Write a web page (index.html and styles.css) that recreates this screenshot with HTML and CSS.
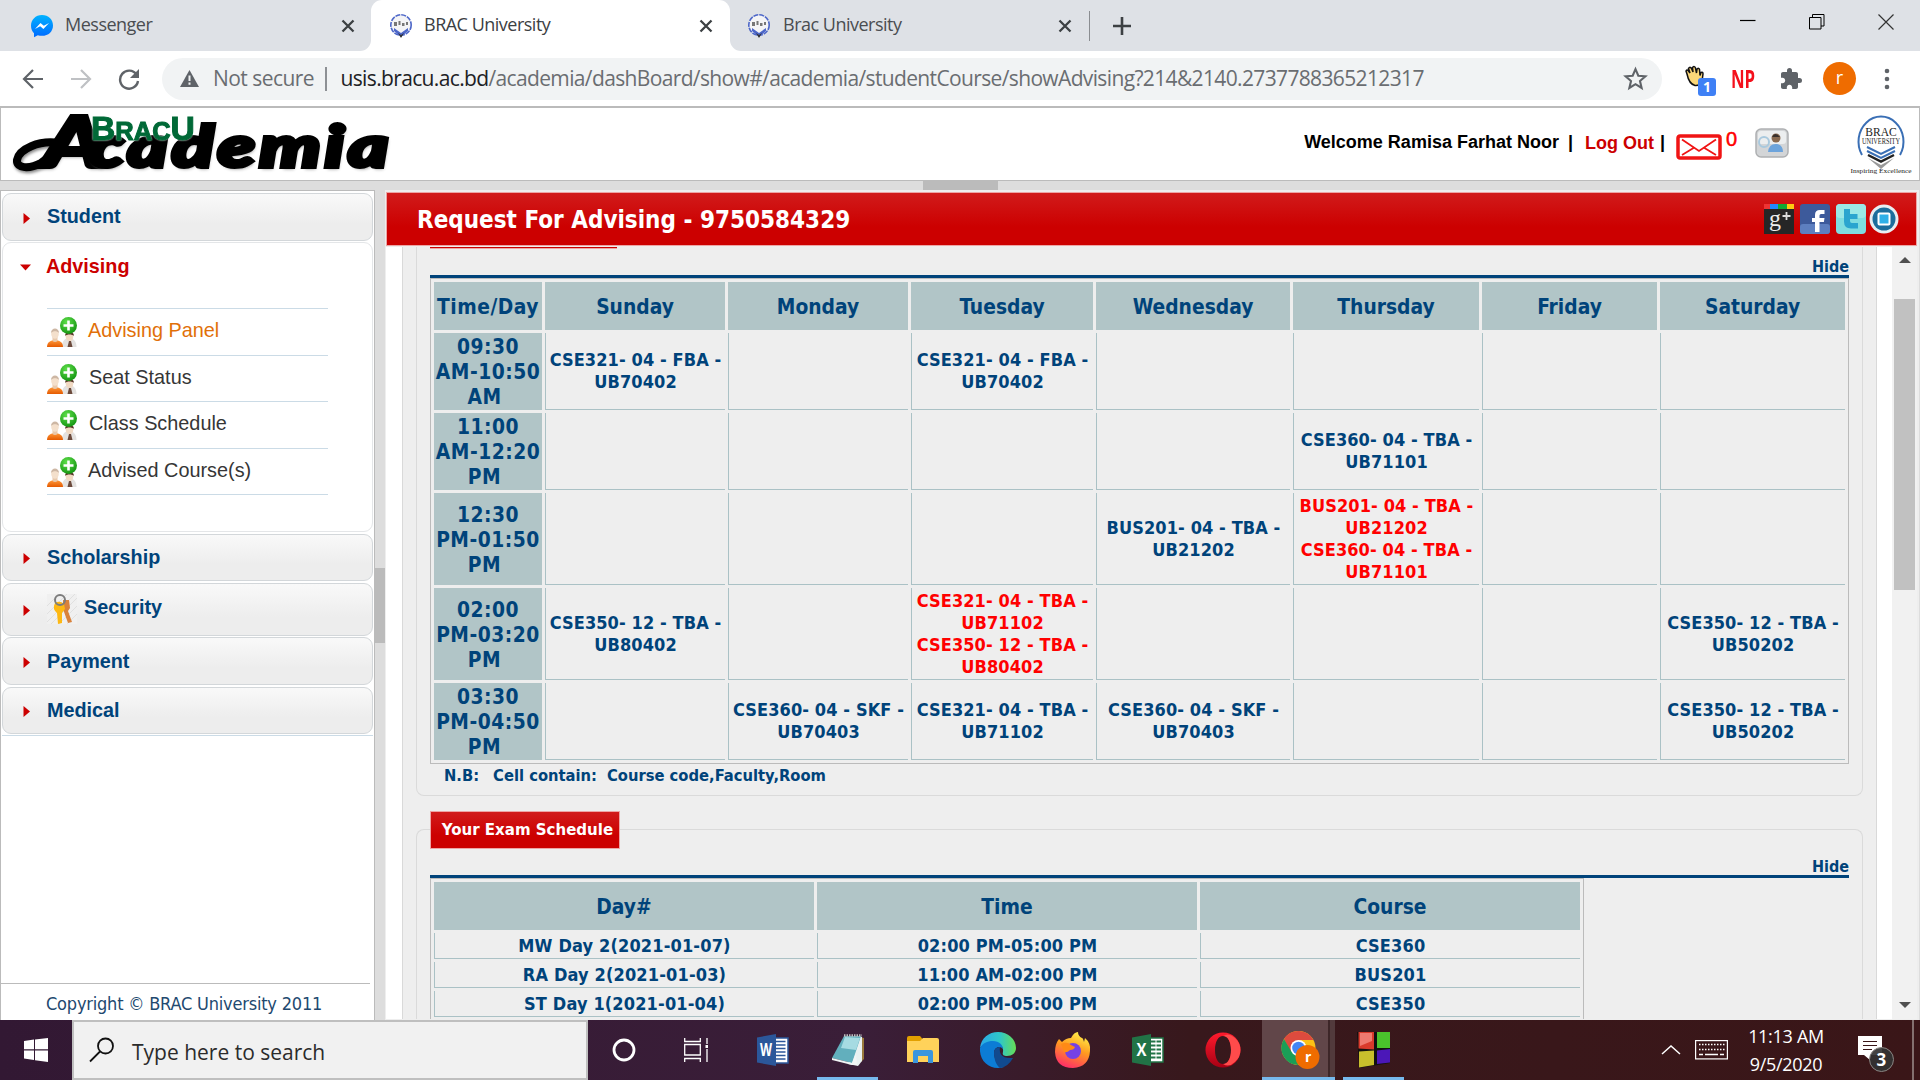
FILE: index.html
```html
<!DOCTYPE html>
<html lang="en">
<head>
<meta charset="utf-8">
<title>BRAC University</title>
<link rel="stylesheet" href="styles.css">
</head>
<body>
<svg width="0" height="0" class="defs">
  <defs>
    <radialGradient id="gGreen" cx=".4" cy=".3" r=".8"><stop offset="0" stop-color="#5fe04a"/><stop offset="1" stop-color="#0c8d0c"/></radialGradient>
    <linearGradient id="gOrange" x1="0" y1="0" x2="0" y2="1"><stop offset="0" stop-color="#ff9a3c"/><stop offset="1" stop-color="#e55a00"/></linearGradient>
    <linearGradient id="gMsg" x1="0" y1="0" x2="0" y2="1"><stop offset="0" stop-color="#00b2ff"/><stop offset="1" stop-color="#006aff"/></linearGradient>
    <symbol id="close" viewBox="0 0 14 14"><path d="M1.5 1.5 12.500 12.500M12.500 1.500 1.500 12.500" stroke="#3c4043" stroke-width="2.300" fill="none"/></symbol>
    <symbol id="crest" viewBox="0 0 24 24"><circle cx="12" cy="11" r="10.200" fill="#f4f4f6" stroke="#4c66c8" stroke-width="1.600" stroke-dasharray="5 1"/><path d="M5 8h3v4H5zM9.500 7h2v4h-2zM13 9h2.500v3H13zM17 8h2v3h-2z" fill="#777"/><path d="M5 14l7 5 7-5v3l-7 6-7-6z" fill="#4c66c8"/><path d="M9 19l3 2 3-2-3 5z" fill="#333"/></symbol>
    <symbol id="people" viewBox="0 0 30 30"><path d="M15 30c0-6 3-9 7-9s7.500 3 7.500 9z" fill="#e4e2e0"/><ellipse cx="22.500" cy="19.500" rx="3.800" ry="5" fill="#f0d9c3"/><path d="M18 19c0-6 9-6 9 0-2-2-7-2-9 0z" fill="#5a3a2a"/><path d="M22 24l2 0 1.500 6h-5z" fill="#6b4a3c"/><circle cx="21.500" cy="8.500" r="8.500" fill="url(#gGreen)"/><path d="M21.500 3.500v10M16.500 8.500h10" stroke="#fff" stroke-width="2.600"/><path d="M0 30c0-5 4-7 8-7s8 2 8 7z" fill="url(#gOrange)"/><path d="M5.500 20h5v4q-2.500 2-5 0z" fill="#e9c9ac"/><ellipse cx="8" cy="17" rx="3.800" ry="4.800" fill="#f4e0cc"/><path d="M4 16c0-6 8-6 8 0-2-2.500-6-2.500-8 0z" fill="#cdb7a4"/></symbol>
    <symbol id="arrow" viewBox="0 0 8 11"><path d="M.5 0 7 5.500.5 11z" fill="#c00"/></symbol>
  </defs>
</svg>

<div class="tabs">
  <div class="tab tab-1"><svg class="fav" viewBox="0 0 24 24"><path d="M12 1C5.500 1 1 5.800 1 11.800c0 3.200 1.200 5.600 3 7.400v4l3.800-2c1.300.4 2.700.6 4.200.6 6.500 0 11-4.500 11-10.400S18.500 1 12 1z" fill="url(#gMsg)"/><path d="M5 15l5.500-6 3.300 2.700L19 9l-5.600 6-3.200-2.700z" fill="#fff"/></svg><span class="t-msg">Messenger</span><svg class="x"><use href="#close"/></svg></div>
  <div class="tab active"><svg class="fav"><use href="#crest"/></svg><span class="t-brac">BRAC University</span><svg class="x"><use href="#close"/></svg></div>
  <div class="tab tab-3"><svg class="fav"><use href="#crest"/></svg><span class="t-brac2">Brac University</span><svg class="x"><use href="#close"/></svg></div>
  <svg class="plus" viewBox="0 0 18 18"><path d="M9 0v18M0 9h18" stroke="#3c4043" stroke-width="2.600"/></svg>
  <div class="win">
    <svg width="16" height="16" viewBox="0 0 16 16"><path d="M0 6.500h15.500" stroke="#000" stroke-width="1.200"/></svg>
    <svg width="16" height="16" viewBox="0 0 16 16"><path d="M.5 3.500h11.500v11.500H.5zM3.500 3.500V.5H15v11.500h-3" stroke="#000" fill="none"/></svg>
    <svg width="16" height="16" viewBox="0 0 16 16"><path d="M.5.5l15 15M15.500.5l-15 15" stroke="#333" stroke-width="1.200"/></svg>
  </div>
</div>

<div class="toolbar">
  <svg class="nav-i" viewBox="0 0 22 22"><path d="M21 11H2.500M11 2 2 11l9 9" stroke="#5f6368" stroke-width="2.200" fill="none"/></svg>
  <svg class="nav-i" viewBox="0 0 22 22"><path d="M1 11h18.500M11 2l9 9-9 9" stroke="#bfc1c4" stroke-width="2.200" fill="none"/></svg>
  <svg class="nav-i" viewBox="0 0 22 22"><path d="M18.500 6.500A9 9 0 1 0 20 13" stroke="#5f6368" stroke-width="2.400" fill="none"/><path d="M21 1v9h-9z" fill="#5f6368"/></svg>
  <div class="omni">
    <svg class="warn" viewBox="0 0 19 17"><path d="M9.500 0 19 17H0z" fill="#5f6368"/><path d="M9.500 5.500v5.500M9.500 12.500v2.200" stroke="#f1f3f4" stroke-width="2"/></svg>
    <span class="insec">Not secure</span><i class="bar"></i>
    <span class="url"><b>usis.bracu.ac.bd</b>/academia/dashBoard/show#/academia/studentCourse/showAdvising?214&amp;2140.2737788365212317</span>
    <svg class="star" viewBox="0 0 24 24"><path d="M12 3l2.700 6.300 6.800.6-5.200 4.500 1.600 6.700L12 17.500l-5.900 3.600 1.600-6.700L2.500 9.900l6.800-.6z" fill="none" stroke="#5f6368" stroke-width="2"/></svg>
  </div>
  <div class="ext">
    <div class="hand"><svg width="22" height="22" viewBox="0 0 22 22"><path d="M3 9 2 6q1-2 2.500 0L6 8 4.500 3.500Q6 1 7.500 3.500L9 7 8.500 2.500Q10.500.5 11.500 3l1 5 .5-4q2-1.500 2.500.5l.5 6 1-3q2-1 2 1.500l-1 7q-2 5-7 4.500Q5 19 3 9z" fill="#fbd779" stroke="#111" stroke-width="1.500"/></svg><span class="badge">1</span></div>
    <span class="np">NP</span>
    <svg class="puz" viewBox="0 0 24 24"><path d="M20.500 11H19V7c0-1.100-.9-2-2-2h-4V3.500a2.500 2.500 0 0 0-5 0V5H4c-1.100 0-2 .9-2 2v3.800h1.500c1.500 0 2.700 1.200 2.700 2.700S5 16.200 3.500 16.200H2V20c0 1.100.9 2 2 2h3.800v-1.500c0-1.500 1.200-2.700 2.700-2.700s2.700 1.200 2.700 2.700V22H17c1.100 0 2-.9 2-2v-4h1.500a2.500 2.500 0 0 0 0-5z" fill="#5f6368"/></svg>
    <span class="avatar">r</span>
    <svg class="dots" viewBox="0 0 6 22"><circle cx="3" cy="3" r="2.300"/><circle cx="3" cy="11" r="2.300"/><circle cx="3" cy="19" r="2.300"/></svg>
  </div>
</div>

<header class="site">
  <div class="logo">
    <svg class="swash" width="90" height="64" viewBox="0 0 90 64"><path d="M56 31C36 28 16 37 14 48c-1 9 13 9 24 3 8-5 14-12 20-20" fill="none" stroke="#000" stroke-width="8" stroke-linecap="round"/></svg>
    <span class="academia"><b>A</b>cademia</span><span class="bracu">B<small>RAC</small>U</span>
  </div>
  <div class="user">
    <span class="welcome">Welcome Ramisa Farhat Noor</span><span class="pipe p1">|</span><span class="logout">Log Out</span><span class="pipe">|</span>
    <svg class="mail" viewBox="0 0 46 26"><rect x="2" y="2" width="42" height="22" rx="2" fill="#fff" stroke="#f01414" stroke-width="3.500"/><path d="M6 5.500l17 11.500L40 5.500M6 21l11.500-7M40 21l-11.500-7" fill="none" stroke="#f01414" stroke-width="1.800"/></svg>
    <span class="count">0</span>
    <svg class="ucard" viewBox="0 0 34 30"><rect x="1" y="1" width="32" height="28" rx="5" fill="#d3d5d7" stroke="#aeb0b2" stroke-width="1.500"/><rect x="3" y="3" width="28" height="13" rx="3" fill="#eceeef"/><circle cx="9" cy="14" r="5" fill="none" stroke="#a9c9de" stroke-width="2"/><circle cx="21" cy="10" r="4.500" fill="#8a6a50"/><path d="M17 9q3-6 8 0z" fill="#39302c"/><path d="M13 24q1-9 9-8 6 1 6 8z" fill="#6da4dc"/></svg>
    <svg class="univ" viewBox="0 0 62 60"><path d="M12 41A22.500 25 0 1 1 50 41" fill="none" stroke="#3a6fb5" stroke-width="2"/><text x="31" y="22" class="u1">BRAC</text><text x="31" y="30" class="u2" textLength="38" lengthAdjust="spacingAndGlyphs">UNIVERSITY</text><path d="M17 33l14 7 14-7M17 37l14 7 14-7" fill="none" stroke="#3a6fb5" stroke-width="2"/><path d="M18 41l13 6.500L44 41" fill="none" stroke="#222" stroke-width="2.500"/><path d="M18 44l13 7 13-7-13 11z" fill="#999"/><text x="31" y="59" class="u3" textLength="61" lengthAdjust="spacingAndGlyphs">Inspiring Excellence</text></svg>
  </div>
</header>
<div class="split-h"><i></i></div>

<div class="main">
  <aside class="side">
    <div class="menu">
      <div class="acc h48"><svg><use href="#arrow"/></svg><span>Student</span></div>
      <div class="open">
        <div class="acc-open"><svg viewBox="0 0 11 7"><path d="M0 .5h11L5.500 6.500z" fill="#c00"/></svg><span>Advising</span></div>
        <ul>
          <li class="on"><svg><use href="#people"/></svg><span>Advising Panel</span></li>
          <li><svg><use href="#people"/></svg><span>Seat Status</span></li>
          <li><svg><use href="#people"/></svg><span>Class Schedule</span></li>
          <li><svg><use href="#people"/></svg><span>Advised Course(s)</span></li>
        </ul>
      </div>
      <div class="acc h47 gap2"><svg><use href="#arrow"/></svg><span class="low">Scholarship</span></div>
      <div class="acc h53 gap2 sec"><svg><use href="#arrow"/></svg>
        <svg class="keys" viewBox="0 0 30 30"><rect width="30" height="30" fill="#f0f0f0"/><path d="M0 20L20 0M0 28L28 0M4 30L30 4M12 30L30 12M20 30l10-10M0 12L12 0" stroke="#e0e0e0"/><path d="M16 6l6 0 1 8-2 3 4 11-4 1-5-14z" fill="#d9823b"/><path d="M8 9q5-3 9 1l1 5-3 4v10l-4 1-1-11q-5-4-2-10z" fill="#fdb813"/><circle cx="13" cy="6" r="5" fill="none" stroke="#7c7c7c" stroke-width="2"/></svg><span>Security</span></div>
      <div class="acc h48"><svg><use href="#arrow"/></svg><span class="low">Payment</span></div>
      <div class="acc h47 gap2"><svg><use href="#arrow"/></svg><span class="low">Medical</span></div>
      <div class="endline"></div>
    </div>
    <footer><span>Copyright © BRAC University 2011</span></footer>
  </aside>
  <div class="split-v"><i></i></div>

  <section class="work">
    <div class="title"><h1>Request For Advising - 9750584329</h1>
      <svg width="30" height="30" viewBox="0 0 30 30"><rect width="30" height="30" fill="#262626"/><rect width="8" height="5" fill="#e33"/><rect x="6" width="8" height="5" fill="#28f"/><rect x="14" width="9" height="5" fill="#1a3"/><rect x="23" width="7" height="5" fill="#fc1"/><text x="5" y="22" class="g">g</text><path d="M22.500 8v8M18.500 12h8" stroke="#ddd" stroke-width="1.800"/></svg>
      <svg width="30" height="30" viewBox="0 0 30 30"><rect width="30" height="30" rx="3" fill="#3d5a9b"/><rect y="20" width="30" height="10" rx="3" fill="#5d7fc0"/><path d="M15 28V18h-3v-4h3v-3q0-5 5-5h4.500v4H21q-1.500 0-1.500 1.500V14h5l-.6 4h-4.400v10z" fill="#fff"/></svg>
      <svg width="30" height="30" viewBox="0 0 30 30"><rect width="30" height="30" rx="4" fill="#7fdde0"/><rect y="0" width="30" height="14" rx="4" fill="#9be8e6"/><path d="M8 5h6v5h7.500v5H14v2q0 2 2 2h6V24.500h-7q-7 0-7-7z" fill="#2aa5cf"/></svg>
      <svg width="30" height="30" viewBox="0 0 30 30"><circle cx="15" cy="15" r="14.500" fill="#e8eef2"/><circle cx="15" cy="15" r="11.500" fill="#1c6d9c"/><rect x="9.500" y="9.500" width="11" height="11" rx="1" fill="#2fb0e8" stroke="#fff" stroke-width="2"/></svg>
    </div>
    <div class="scroll">
      <div class="panel">
        <div class="fs fs1">
          <div class="legend-end"></div>
          <div class="hide">Hide</div>
          <table class="sched">
            <colgroup><col style="width:108px"><col style="width:180px"><col style="width:180px"><col style="width:182px"><col style="width:194px"><col style="width:186px"><col style="width:175px"><col style="width:185px"></colgroup>
            <tr class="hd"><th>Time/Day</th><th>Sunday</th><th>Monday</th><th>Tuesday</th><th>Wednesday</th><th>Thursday</th><th>Friday</th><th>Saturday</th></tr>
            <tr class="r77"><th>09:30<br>AM-10:50<br>AM&nbsp;</th><td>CSE321- 04 - FBA -<br>UB70402</td><td></td><td>CSE321- 04 - FBA -<br>UB70402</td><td></td><td></td><td></td><td></td></tr>
            <tr class="r77"><th>11:00<br>AM-12:20<br>PM&nbsp;</th><td></td><td></td><td></td><td></td><td>CSE360- 04 - TBA -<br>UB71101</td><td></td><td></td></tr>
            <tr class="r92"><th>12:30<br>PM-01:50<br>PM&nbsp;</th><td></td><td></td><td></td><td>BUS201- 04 - TBA -<br>UB21202</td><td class="clash">BUS201- 04 - TBA -<br>UB21202<br>CSE360- 04 - TBA -<br>UB71101</td><td></td><td></td></tr>
            <tr class="r92"><th>02:00<br>PM-03:20<br>PM&nbsp;</th><td>CSE350- 12 - TBA -<br>UB80402</td><td></td><td class="clash">CSE321- 04 - TBA -<br>UB71102<br>CSE350- 12 - TBA -<br>UB80402</td><td></td><td></td><td></td><td>CSE350- 12 - TBA -<br>UB50202</td></tr>
            <tr class="r77"><th>03:30<br>PM-04:50<br>PM&nbsp;</th><td></td><td>CSE360- 04 - SKF -<br>UB70403</td><td>CSE321- 04 - TBA -<br>UB71102</td><td>CSE360- 04 - SKF -<br>UB70403</td><td></td><td></td><td>CSE350- 12 - TBA -<br>UB50202</td></tr>
          </table>
          <div class="nb"><span>N.B:</span><span>Cell contain:</span><span>Course code,Faculty,Room</span></div>
        </div>
        <div class="legend"><span>Your Exam Schedule</span></div>
        <div class="fs fs2">
          <div class="hide">Hide</div>
          <table class="exam">
            <tr class="hd"><th>Day#</th><th>Time</th><th>Course</th></tr>
            <tr><td>MW Day 2(2021-01-07)</td><td>02:00 PM-05:00 PM</td><td>CSE360</td></tr>
            <tr><td>RA Day 2(2021-01-03)</td><td>11:00 AM-02:00 PM</td><td>BUS201</td></tr>
            <tr><td>ST Day 1(2021-01-04)</td><td>02:00 PM-05:00 PM</td><td>CSE350</td></tr>
          </table>
        </div>
      </div>
      <div class="sbar"><svg width="12" height="6"><path d="M0 6 6 0l6 6z" fill="#505050"/></svg><i></i><svg width="12" height="6"><path d="M0 0h12L6 6z" fill="#505050"/></svg></div>
    </div>
  </section>
</div>

<div class="task">
  <div class="start"><svg width="24" height="24" viewBox="0 0 24 24"><path d="M0 3l10-1.400V11.300H0zM11 1.400 24 0v11.300H11zM0 12.500h10V22L0 20.600zM11 12.500h13V24l-13-1.800z" fill="#fff"/></svg></div>
  <div class="search"><svg width="26" height="26" viewBox="0 0 26 26"><circle cx="16.500" cy="9" r="7.500" fill="none" stroke="#111" stroke-width="1.800"/><path d="M11 14.500 1 24.500" stroke="#111" stroke-width="1.800"/></svg><span>Type here to search</span></div>
  <div class="apps">
    <div class="app c1"><svg width="24" height="24" viewBox="0 0 24 24"><circle cx="12" cy="12" r="10" fill="none" stroke="#fff" stroke-width="2.800"/></svg></div>
    <div class="app tv"><svg width="24" height="24" viewBox="0 0 24 24"><path d="M.7 0v3.500h15.600V0M.7 24v-3.500h15.600V24M.7 6.500h15.600v10.500H.7zM23 0v6M23 11v13" fill="none" stroke="#fff" stroke-width="1.300"/><path d="M21.500 7h3v3h-3z" fill="#fff"/></svg></div>
    <div class="app"><svg width="32" height="32" viewBox="0 0 32 32"><rect x="17" y="4" width="14" height="25" fill="#fff" stroke="#2b579a" stroke-width="1.500"/><path d="M19 7.500h9.500M19 11h9.500M19 14.500h9.500M19 18h9.500M19 21.500h9.500M19 25h9.500" stroke="#2b579a" stroke-width="1.500"/><path d="M0 3.500 19 0v32L0 28.500z" fill="#2b579a"/><text x="3" y="22" class="of" textLength="12" lengthAdjust="spacingAndGlyphs">W</text></svg></div>
    <div class="app under"><svg width="32" height="32" viewBox="0 0 32 32"><path d="M28 3l4 1v21l-3 3z" fill="#9a7a3c"/><path d="M22 3h8v24l-4 5-10-2z" fill="#e9f1f1"/><path d="M12 2h17l-9 27-20-5z" fill="#62afbd"/><path d="M13 3l15 1-4 12-15-2z" fill="#a6dbe2"/><path d="M0 24l20 5 4-10 1 12-5 0-20-5z" fill="#f1f5f5"/><path d="M12 1.500h18" stroke="#bdbdbd" stroke-width="2.500" stroke-dasharray="1.500 1"/></svg></div>
    <div class="app"><svg width="32" height="28" viewBox="0 0 32 28"><path d="M0 2q0-2 2-2h11l2.500 3v10H0z" fill="#e2a000"/><path d="M0 5h13l3-3h14q2 0 2 2v22H0z" fill="#ffd25a"/><path d="M6 27V16q0-2 2-2h16q2 0 2 2v11h-5v-7H11v7z" fill="#3a96dd"/></svg></div>
    <div class="app"><svg width="36" height="36" viewBox="0 0 36 36"><defs><linearGradient id="e1"><stop offset="0" stop-color="#2aa8e8"/><stop offset=".55" stop-color="#2fc7c8"/><stop offset="1" stop-color="#66dd55"/></linearGradient></defs><path d="M0 16C1 6 9 0 18 0c10 0 18 7 18 16 0 5-4 8-9 8-3 0-5-1-4-4 1-5-3-9-9-9-6 0-12 2-14 5z" fill="url(#e1)"/><path d="M0 16c3-5 7-7 13-7 6 0 10 4 10 8-3-4-9-2-9 4 0 6 5 14 10 14C11 39-1 30 0 16z" fill="#0c7cd5"/><path d="M14 21c0-4 3-6 6-6-1 6 1 12 13 11q-5 9-13 10c-4-3-6-9-6-15z" fill="#114a8f"/></svg></div>
    <div class="app"><svg width="36" height="36" viewBox="0 0 36 36"><defs><linearGradient id="f1" x1=".7" y1="0" x2=".3" y2="1"><stop offset="0" stop-color="#fff04a"/><stop offset=".45" stop-color="#ff9a1f"/><stop offset="1" stop-color="#ff2a6a"/></linearGradient></defs><path d="M4 7l3 3q4-4 9-4 3-6 7-6 0 4 4 6 1 0 2 4l1-4q6 5 5 13-1 16-17 17Q1 36 0 20q0-8 4-13z" fill="url(#f1)"/><circle cx="18" cy="19" r="8" fill="#7542e5"/><path d="M6 12q6-3 10 1l4 2q-1 3-5 3-3 3-6 2z" fill="#ff8a16"/></svg></div>
    <div class="app"><svg width="32" height="32" viewBox="0 0 32 32"><rect x="17" y="4" width="14" height="24" fill="#fff" stroke="#217346" stroke-width="1.500"/><path d="M19 7.500h10M19 11.500h10M19 15.500h10M19 19.500h10M19 23.500h10" stroke="#217346" stroke-width="2.200" stroke-dasharray="4.500 1"/><path d="M0 3.500 19 0v32L0 28.500z" fill="#217346"/><text x="4.500" y="22" class="of" textLength="10" lengthAdjust="spacingAndGlyphs">X</text></svg></div>
    <div class="app"><svg width="36" height="36" viewBox="0 0 36 36"><defs><linearGradient id="o1" x1="0" y1="0" x2="0" y2="1"><stop offset="0" stop-color="#ff1b2d"/><stop offset="1" stop-color="#a70014"/></linearGradient></defs><path fill-rule="evenodd" d="M18 .5a17.500 17.500 0 1 0 0 35 17.500 17.500 0 1 0 0-35zM18 4c5 0 8 6 8 14s-3 14-8 14-8-6-8-14 3-14 8-14z" fill="url(#o1)"/><path d="M18 4q6-4 12 2 5.500 5 5.500 12T30 30q-6 6-12 2c5 0 8-6 8-14s-3-14-8-14z" fill="#ff4b4b"/></svg></div>
    <div class="app chrome"><svg width="40" height="40" viewBox="0 0 40 40"><circle cx="17.500" cy="18" r="17" fill="#fbc116"/><path d="M3 9A17 17 0 0 1 32.500 10H17.500l-8 12z" fill="#dd4b3e"/><path d="M3 9a17 17 0 0 0 14 26l8-14-15 0z" fill="#1a9e57"/><circle cx="17.500" cy="18" r="8" fill="#fff"/><circle cx="17.500" cy="18" r="6.300" fill="#4285f4"/><circle cx="26.500" cy="27" r="12" fill="#ef6c00"/><text x="24" y="32" class="rr">r</text></svg></div>
    <div class="app under sq"><svg width="34" height="36" viewBox="0 0 34 36"><path d="M0 0h33v31L2 36z" fill="#111"/><path d="M1.500 0H17v17.500l-15.500-1z" fill="#d83a2c"/><path d="M3 1h12v8L3 14z" fill="#ee7a70"/><path d="M20 0h13v16H20z" fill="#4ac22c"/><path d="M2 19.500l15-1V33L2 35.500z" fill="#c8bf2c"/><path d="M20 18.500l13-1.500v13.500L20 32z" fill="#4b17b8"/></svg></div>
  </div>
  <div class="tray">
    <svg width="20" height="10" viewBox="0 0 20 10"><path d="M1 9l9-8 9 8" stroke="#fff" stroke-width="1.500" fill="none"/></svg>
    <svg class="kb" width="33" height="20" viewBox="0 0 33 20"><rect x=".6" y=".6" width="31.800" height="18.300" fill="none" stroke="#fff" stroke-width="1.200"/><path d="M4 4.500h26M4 9.500h26" stroke="#fff" stroke-width="1.300" stroke-dasharray="1.500 1.500"/><path d="M4 14.500h4M10 14.500h13M25 14.500h4" stroke="#fff" stroke-width="1.300"/></svg>
    <div class="clock"><span class="time">11:13 AM</span><span class="date">9/5/2020</span></div>
    <svg class="note" width="38" height="38" viewBox="0 0 38 38"><path d="M0 1h24v19H12v5l-6-5H0z" fill="#fff"/><path d="M5 6.500h14M5 10.500h14M5 14.500h9" stroke="#3a1618" stroke-width="1.200"/><circle cx="23.500" cy="24.500" r="12" fill="#333" fill-opacity=".92" stroke="#8a8583"/><text x="18.500" y="31" class="n3">3</text></svg>
    <i class="desk"></i>
  </div>
</div>
</body>
</html>
```
FILE: styles.css
```css
* { box-sizing: border-box; }
body { margin: 0; width: 1920px; height: 1080px; overflow: hidden; background: #ddd; font-family: "Liberation Sans", Arial, sans-serif; }
svg { display: block; flex: none; }
span, h1 { white-space: nowrap; }
.defs { position: absolute; }

/* browser tabs */
.tabs { height: 51px; background: #dee1e6; display: flex; align-items: center; font: 18px/24px "Open Sans", "Noto Sans", sans-serif; color: #4a4d51; letter-spacing: -.5px; }
.tab { height: 51px; display: flex; align-items: center; }
.tab span { flex: 1; padding: 0 0 3px 11px; }
.tab-1 { width: 371px; padding: 0 16px 0 30px; border-radius: 0 0 11px 0; background: #dee1e6; position: relative; }
.tab.active { width: 359px; padding: 0 17px 0 18px; background: #fff; border-radius: 11px 11px 0 0; color: #3c4043; }
.tab-3 { width: 359px; padding: 0 17px; border-radius: 0 0 0 11px; }
.tab-3 span { padding-left: 12px; }
.tab-3::after { content: ""; width: 1px; height: 30px; background: #8a8d91; margin: 0 -18px 0 17px; }
.tabs .tab-1, .tabs .tab-3 { box-shadow: 0 11px 0 0 #fff; z-index: 1; }
.fav { width: 24px; height: 24px; }
.x { width: 14px; height: 14px; }
.plus { width: 18px; height: 18px; margin-left: 24px; }
.win { display: flex; margin-left: auto; gap: 53px; padding: 0 26px 8px 0; }

/* address bar */
.toolbar { height: 55px; background: #fff; display: flex; align-items: center; padding: 0 0 0 22px; position: relative; z-index: 2; font-family: "Open Sans", "Noto Sans", sans-serif; }
.nav-i { width: 22px; height: 22px; margin-right: 26px; }
.omni { width: 1500px; height: 42px; margin-left: -4px; border-radius: 21px; background: #f1f3f4; display: flex; align-items: center; padding-left: 18px; font-size: 21px; line-height: 28px; color: #6a6d71; }
.warn { width: 19px; height: 17px; }
.insec { margin-left: 14px; width: 112px; letter-spacing: -.55px; padding-bottom: 1px; }
.bar { width: 1.500px; height: 24px; background: #8d9094; margin-right: 14px; }
.url { letter-spacing: -.64px; padding-bottom: 1px; }
.url b { font-weight: 400; color: #202124; }
.star { width: 25px; height: 25px; margin: 0 14px 0 auto; }
.ext { display: flex; align-items: center; flex: 1; padding-left: 22px; }
.hand { width: 32px; height: 32px; position: relative; margin-top: 4px; }
.badge { position: absolute; left: 14px; top: 13px; width: 18px; height: 18px; border-radius: 3px; background: #3f80f5; color: #fff; font: bold 14px/18px "Open Sans", sans-serif; text-align: center; }
.np { width: 24px; margin-left: 15px; padding-bottom: 2px; color: #f4101c; font: bold 25px/30px "Open Sans", sans-serif; transform: scaleX(.67); transform-origin: left; }
.puz { width: 24px; height: 24px; margin-left: 24px; }
.avatar { width: 33px; height: 33px; border-radius: 50%; background: #ef6c00; color: #fff; font-size: 18px; line-height: 30px; text-align: center; margin-left: 20px; }
.dots { width: 6px; height: 22px; margin-left: 28px; fill: #5f6368; }

/* site header */
.site { height: 75px; background: #fff; border: 1px solid #bbb; border-top-width: 2px; display: flex; justify-content: space-between; }
.logo { position: relative; width: 400px; }
.swash { position: absolute; left: 2px; top: 4px; filter: drop-shadow(1px 2px 1.500px #888); }
.academia { position: absolute; left: 42px; top: 1px; font: italic 900 57px/72px "Lato", sans-serif; color: #000; -webkit-text-stroke: 4px #000; text-shadow: 1px 2px 3px #888; letter-spacing: 3px; transform-origin: left; transform: scaleX(1.35); }
.academia b { font-weight: 900; font-size: 70px; line-height: 60px; margin-right: -15px; }
.bracu { position: absolute; left: 90px; top: 5px; font: bold 33px/32px "Liberation Sans", sans-serif; color: #006937; -webkit-text-stroke: 1px #006937; text-shadow: 0 0 2px #fff, 0 0 2px #fff; transform: scaleX(1.02); transform-origin: left; }
.bracu small { font-size: 25px; }
.user { display: flex; align-items: flex-start; font-weight: bold; font-size: 18px; line-height: 22px; color: #000; padding-top: 23px; }
.pipe.p1 { margin: 0 12px 0 9px; }
.logout { color: #c00; margin: 1px 6px 0 0; }
.mail { width: 46px; height: 26px; margin: 3px 4px 0 11px; }
.count { color: #f00; font-size: 20px; font-weight: 400; margin-top: -3px; width: 29px; -webkit-text-stroke: .5px #f00; }
.ucard { width: 34px; height: 30px; margin-top: -3px; }
.univ { width: 62px; height: 60px; margin: -17px 7px 0 61px; }
.univ text { text-anchor: middle; font-family: "Liberation Serif", serif; font-weight: 400; fill: #222; }
.u1 { font-size: 11.500px; }
.u2 { font-size: 8px; }
.u3 { font-size: 6px; }
.split-h { height: 9px; background: #ddd; display: flex; justify-content: center; }
.split-h i { width: 75px; background: #bbb; }

/* columns */
.main { display: flex; height: 830px; }
.side { width: 375px; background: #fff; border: 1px solid #bbb; border-bottom: 0; display: flex; flex-direction: column; }
.menu { flex: 1; padding: 2px 1px 0; }
.acc { border: 1px solid #d3d7da; border-radius: 9px; background: linear-gradient(#f9f9f9, #ededed 65%); display: flex; align-items: center; padding-left: 20px; color: #00437a; font-weight: bold; font-size: 19.800px; margin-bottom: 1px; }
.acc > svg { width: 8px; height: 11px; margin: 2px 16px 0 0; }
.acc span { padding-bottom: 2px; }
.acc span.low { padding-bottom: 0; }
.acc.sec span { padding-bottom: 4px; }
.acc > .keys { width: 30px; height: 30px; margin: -2px 7px 0 0; }
.h48 { height: 48px; }
.h47 { height: 47px; }
.h53 { height: 53px; }
.gap2 { margin-top: 2px; }
.open { height: 290px; border: 1px solid #e4e6e8; border-radius: 9px; }
.acc-open { height: 48px; display: flex; align-items: center; padding-left: 17px; color: #c00; font-weight: bold; font-size: 19.800px; }
.acc-open svg { width: 11px; height: 7px; margin-right: 15px; }
.acc-open span { padding-bottom: 2px; }
.open ul { list-style: none; margin: 17px 0 0 44px; padding: 0; width: 281px; border-top: 1px solid #cbdbe6; }
.open li { height: 46.500px; border-bottom: 1px solid #cbdbe6; display: flex; padding-top: 8px; font-size: 19.850px; line-height: 26px; color: #363636; }
.open li.on { color: #e17009; }
.open li.on span, .open li:last-child span { margin-left: 11px; }
.open li svg { width: 30px; height: 30px; }
.open li span { margin-left: 12px; }
.endline { height: 1px; background: #cbdbe6; }
footer { height: 37px; margin-right: 4px; border-top: 1px solid #bbb; padding: 7px 0 0 45px; color: #22496f; font: 18px/26px "DejaVu Sans Condensed", "DejaVu Sans", sans-serif; letter-spacing: -.2px; }
.split-v { width: 11px; background: #ddd; border-right: 1px solid #eee; }
.split-v i { display: block; margin-top: 378px; width: 10px; height: 75px; background: #bbb; }

/* working area */
.work { width: 1534px; background: #eee; padding: 2px 2px 2px 0; font-family: "DejaVu Sans Condensed", "DejaVu Sans", sans-serif; font-weight: bold; color: #00437a; border-right: 1px solid #ddd; }
.title { height: 54px; border: 1px solid #eda5a5; background: linear-gradient(#d11b1b, #c00 65%); display: flex; align-items: center; padding-right: 17px; }
.title h1 { margin: 0 auto 0 30px; padding-top: 2px; font-size: 24px; line-height: 30px; color: #fff; letter-spacing: 0; }
.title svg { margin-left: 6px; }
.title svg:last-child { margin-left: 3px; }
.g { font: 24px "Liberation Serif", serif; fill: #eee; }
.scroll { height: 772px; margin-top: 1px; background: #fff; display: flex; padding-left: 16px; overflow: hidden; }
.panel { width: 1475px; height: 772px; background: #eee; border: solid #d9d9d9; border-width: 0 1px; padding: 0 13px; overflow: hidden; }
.fs { border: 1px solid #dadada; padding: 0 13px; }
.fs1 { height: 549px; border-top: 0; border-radius: 0 0 8px 8px; }
.legend-end { width: 187px; height: 2px; background: #c00; border-bottom: 1px solid #eda5a5; }
.hide { height: 28px; margin-top: -2px; border-bottom: 3px solid #00437a; text-align: right; font-size: 16px; }
.fs1 .hide { height: 31px; margin-top: -2px; line-height: 40px; }
table { table-layout: fixed; border: 1px solid #bbb; border-collapse: separate; border-spacing: 3px; text-align: center; }
th, td { padding: 0; overflow: hidden; white-space: nowrap; }
th { background: #b1c5c7; font-size: 20.800px; line-height: 25px; padding-top: 2px; }
td { border: solid #aac1c5; border-width: 0 0 1px 1px; font-size: 18px; line-height: 22px; letter-spacing: .1px; }
.sched { width: 1419px; }
.sched th:first-child { letter-spacing: .5px; }
.hd { height: 48px; }
.r77 { height: 77px; }
.r92 { height: 92px; }
.clash { color: #f00; }
.nb { display: flex; gap: 14px; padding: 1px 0 0 14px; font-size: 16.400px; line-height: 22px; }
.nb span:last-child { margin-left: -4px; }
.legend { width: 190px; height: 38px; margin: 15px 0 -20px 14px; border: 1px solid #eda5a5; background: linear-gradient(#d11b1b, #c00 65%); color: #fff; font-size: 16.700px; line-height: 34px; text-align: center; position: relative; }
.legend span { padding-left: 5px; }
.fs2 { height: 230px; border-radius: 8px 8px 0 0; border-bottom: 0; }
.fs2 .hide { height: 48px; margin: 0; line-height: 73px; }
.exam { width: 1154px; }
.exam td { height: 26px; letter-spacing: .15px; }
.sbar { width: 25px; margin-left: 15px; background: #f1f1f1; display: flex; flex-direction: column; align-items: center; padding: 10px 0 11px; }
.sbar i { width: 21px; height: 291px; background: #c1c1c1; margin: 36px 0 auto; }

/* taskbar */
.task { height: 60px; display: flex; background: linear-gradient(90deg, #321833, #3a1e38 45%, #38181c 62%, #3a1618); color: #fff; font-family: "Open Sans", "Noto Sans", sans-serif; }
.start { width: 72px; display: flex; align-items: center; justify-content: center; }
.search { width: 516px; border: 2px solid #bfbfbf; background: #f1f1f1; color: #2b2b2b; display: flex; align-items: center; padding-left: 15px; font-size: 21px; letter-spacing: 0; }
.search span { margin: 3px 0 0 17px; }
.apps { display: flex; }
.app { width: 61px; margin-right: 14px; display: flex; align-items: center; justify-content: center; }
.app.c1 { margin: 0 12px 0 5px; }
.app.tv { margin-right: 15px; padding-right: 2px; }
.under { border-bottom: 3px solid #76b9ed; padding-top: 3px; }
.chrome { width: 73px; margin: 0 8px 0 -5px; border-bottom: 3px solid #76b9ed; padding: 3px 0 0 5px; background: linear-gradient(90deg, #614649 0 66px, #3d2628 66px 68px, #523a3c 68px); }
.of { font: bold 17px "Open Sans", sans-serif; fill: #fff; }
.rr { font: bold 14px "Open Sans", sans-serif; fill: #fff; }
.n3 { font: bold 17px "Open Sans", sans-serif; fill: #fff; }
.tray { margin-left: auto; display: flex; align-items: center; }
.kb { margin-left: 14px; }
.clock { width: 80px; margin: 0 1px 0 18px; text-align: center; display: flex; flex-direction: column; font-size: 18px; line-height: 28px; letter-spacing: -.3px; }
.note { margin: 7px 0 0 31px; }
.desk { width: 2px; height: 60px; background: #84706f; margin: 0 6px 0 16px; }
```
